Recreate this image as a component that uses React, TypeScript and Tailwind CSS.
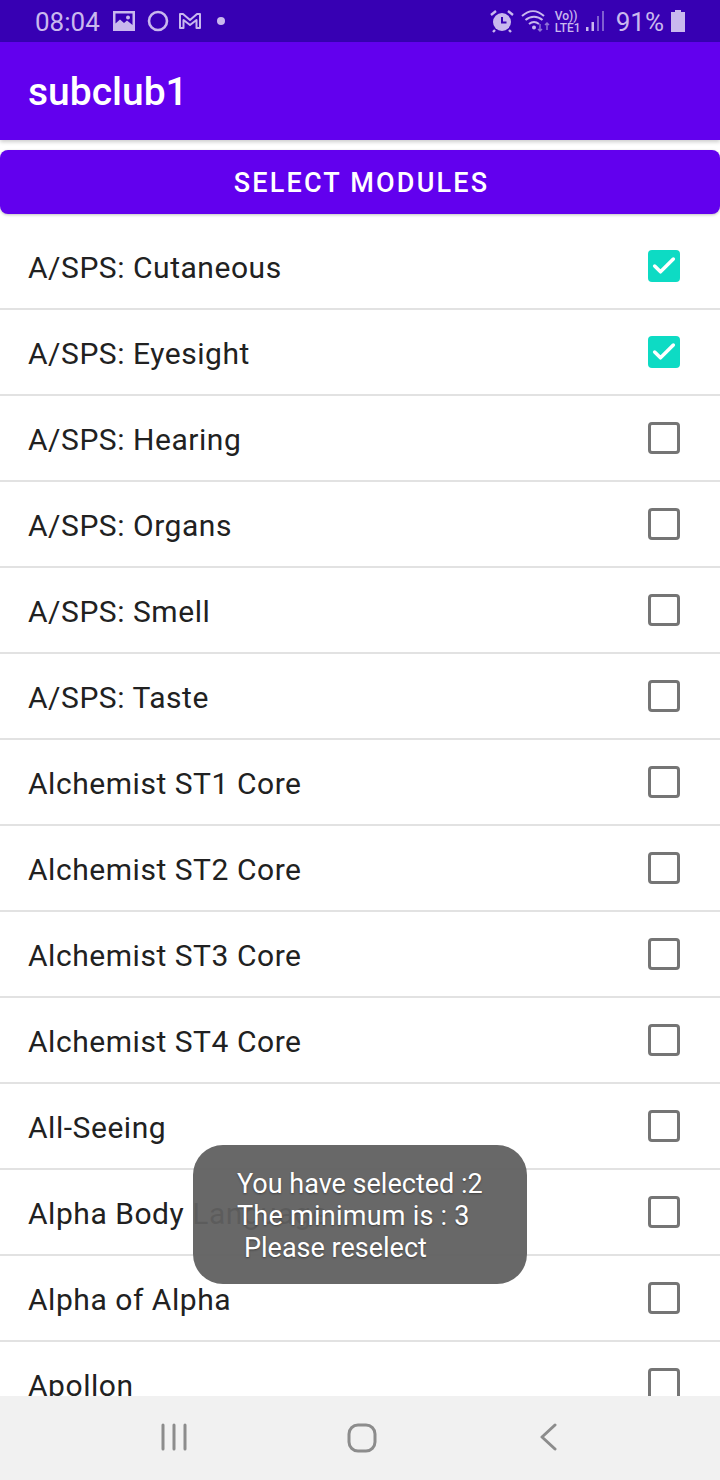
import { Check } from 'lucide-react';

const modules = [
  { name: 'A/SPS: Cutaneous', checked: true },
  { name: 'A/SPS: Eyesight', checked: true },
  { name: 'A/SPS: Hearing', checked: false },
  { name: 'A/SPS: Organs', checked: false },
  { name: 'A/SPS: Smell', checked: false },
  { name: 'A/SPS: Taste', checked: false },
  { name: 'Alchemist ST1 Core', checked: false },
  { name: 'Alchemist ST2 Core', checked: false },
  { name: 'Alchemist ST3 Core', checked: false },
  { name: 'Alchemist ST4 Core', checked: false },
  { name: 'All-Seeing', checked: false },
  { name: 'Alpha Body Language', checked: false },
  { name: 'Alpha of Alpha', checked: false },
  { name: 'Apollon', checked: false },
];

function StatusBar() {
  return (
    <div className="h-[42px] bg-[#3700B3] flex items-center justify-between pl-[35px] pr-[35px] text-[#c9b8ee]">
      <div className="flex items-center">
        <span className="text-[26px] leading-none pt-[2px]">08:04</span>
        <svg className="ml-[13px]" width="22" height="20" viewBox="0 0 22 20">
          <path fillRule="evenodd" fill="currentColor" d="M0 0h22v20H0z M2.500 2.500v10l4.500-4 4 3.500 3-2.500 5.500 4.500V2.500z" />
          <circle cx="15" cy="6.500" r="2" fill="currentColor" />
        </svg>
        <svg className="ml-[12px]" width="22" height="22" viewBox="0 0 22 22">
          <circle cx="11" cy="11" r="9" fill="none" stroke="currentColor" strokeWidth="2.600" />
        </svg>
        <svg className="ml-[10px]" width="22" height="18" viewBox="0 0 22 18">
          <path fill="none" stroke="currentColor" strokeWidth="2" strokeLinejoin="round" d="M1 2h3l7 6 7-6h3v14h-3.500V8l-6.500 5-6.500-5v8H1z" />
        </svg>
        <span className="ml-[16px] w-[8px] h-[8px] rounded-full bg-current" />
      </div>
      <div className="flex items-center">
        <svg width="24" height="24" viewBox="0 0 24 24">
          <circle cx="12" cy="13" r="9" fill="currentColor" />
          <path d="M12 8v5.500h4.500" fill="none" stroke="#3700B3" strokeWidth="2" />
          <path d="M1 6l5-4M23 6l-5-4M5 21l-2 2M19 21l2 2" stroke="currentColor" strokeWidth="2.400" />
        </svg>
        <svg className="ml-[7px]" width="29" height="24" viewBox="0 0 29 24">
          <path d="M1 7c7-6.500 15-6.500 22 0M4.500 11c5-4.500 12-4.500 17 0M8 15c3-2.500 7-2.500 10 0" fill="none" stroke="currentColor" strokeWidth="2" />
          <circle cx="13" cy="18.500" r="2" fill="currentColor" />
          <path d="M19 15v7M17 20l2 2 2-2M26 21v-7M24 16l2-2 2 2" fill="none" stroke="#8f73d6" strokeWidth="1.500" />
        </svg>
        <div className="ml-[5px] flex flex-col text-[12px] leading-[12px] font-medium w-[26px] pt-[1px]">
          <span>Vo))</span>
          <span>LTE1</span>
        </div>
        <svg className="ml-[4px]" width="20" height="22" viewBox="0 0 20 22">
          <rect x="1" y="17" width="2.500" height="4" fill="currentColor" />
          <rect x="6.500" y="12" width="2.500" height="9" fill="currentColor" />
          <rect x="12" y="6" width="2" height="15" fill="#7f5fd0" />
          <rect x="17" y="1" width="2" height="20" fill="#7f5fd0" />
        </svg>
        <span className="ml-[11px] text-[26px] leading-none pt-[2px]">91%</span>
        <svg className="ml-[7px]" width="14" height="22" viewBox="0 0 14 22">
          <path d="M4 0h6v2h4v20H0V2h4z" fill="currentColor" />
        </svg>
      </div>
    </div>
  );
}

function ModuleRow({ name, checked }: { name: string; checked: boolean }) {
  return (
    <div className="h-[86px] shrink-0 border-b-2 border-[#e2e2e2] flex items-center justify-between pl-[28px] pr-[40px]">
      <span className="text-[30px] leading-none pt-[3px] text-[#212121] tracking-[0.54px]">{name}</span>
      {checked ? (
        <div className="w-[32px] h-[32px] rounded-[4px] bg-[#0ddbc4] flex items-center justify-center">
          <Check className="text-white" size={28} strokeWidth={3} />
        </div>
      ) : (
        <div className="w-[32px] h-[32px] rounded-[4px] border-[3px] border-[#757575]" />
      )}
    </div>
  );
}

export default function App() {
  return (
    <div className="relative w-[720px] h-[1480px] flex flex-col bg-white overflow-hidden font-['Roboto',sans-serif]">
      <StatusBar />
      <div className="h-[98px] bg-[#6200EE] flex items-center pl-[28px] shadow-[0_2px_4px_rgba(0,0,0,0.2)]">
        <h1 className="text-[39px] font-medium text-white leading-none pt-[2px]">subclub1</h1>
      </div>
      <button className="mt-[10px] h-[64px] w-full shrink-0 rounded-[8px] bg-[#6200EE] text-white text-[27px] font-medium tracking-[2.2px] pl-[3px] pt-[2px] shadow-[0_1px_3px_rgba(0,0,0,0.25)]">
        SELECT MODULES
      </button>
      <div className="mt-[10px] flex-1 flex flex-col overflow-hidden">
        {modules.map(m => (
          <ModuleRow key={m.name} name={m.name} checked={m.checked} />
        ))}
      </div>
      <div className="h-[84px] shrink-0 bg-[#f1f1f1] relative flex items-center justify-center text-[#8c8c8c]">
        <svg className="absolute left-[160px] top-[27px]" width="28" height="28" viewBox="0 0 28 28">
          <path d="M3 2v24M14 2v24M25 2v24" stroke="currentColor" strokeWidth="3" strokeLinecap="round" />
        </svg>
        <svg className="absolute left-[346px] top-[26px]" width="32" height="32" viewBox="0 0 32 32">
          <rect x="3" y="3" width="26" height="26" rx="9" fill="none" stroke="currentColor" strokeWidth="3" />
        </svg>
        <svg className="absolute left-[539px] top-[27px]" width="20" height="28" viewBox="0 0 20 28">
          <path d="M16 2L3 14l13 12" fill="none" stroke="currentColor" strokeWidth="3" strokeLinecap="round" strokeLinejoin="round" />
        </svg>
      </div>
      <div className="absolute left-[193px] top-[1145px] w-[334px] h-[139px] rounded-[30px] bg-[#606060]/95 text-white text-[27px] leading-[32px] pt-[23px] pl-[44px] [text-shadow:0_1px_2px_rgba(0,0,0,0.4)]">
        <div>You have selected :2</div>
        <div className="tracking-[0.25px]">The minimum is : 3</div>
        <div className="pl-[7px]">Please reselect</div>
      </div>
    </div>
  );
}
